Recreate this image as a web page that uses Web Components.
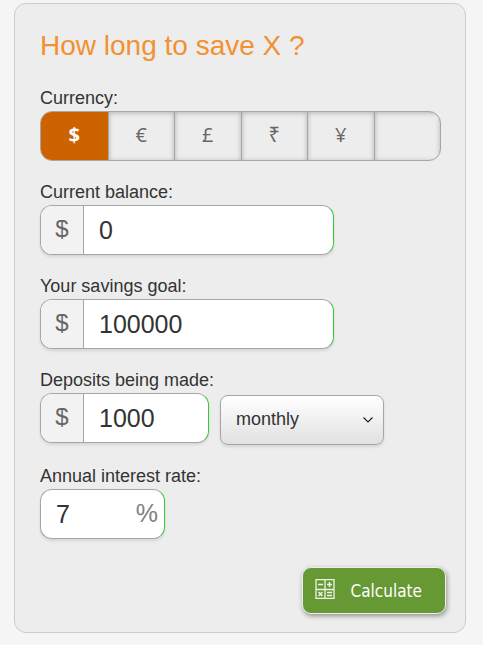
<!DOCTYPE html>
<html lang="en">
<head>
<meta charset="utf-8">
<meta name="viewport" content="width=device-width, initial-scale=1">
<title>Savings calculator</title>
<style>
body {
    margin: 0;
    padding: 3px 17px 12px 14px;
    background-color: #f5f5f5;
    color: #333;
    font: 18px/22px "Liberation Sans", Arial, sans-serif;
}
</style>
</head>
<body>
<savings-card heading="How long to save X ?">
    <currency-picker label="Currency:"></currency-picker>
    <amount-field label="Current balance:" prefix="$" value="0"></amount-field>
    <amount-field label="Your savings goal:" prefix="$" value="100000"></amount-field>
    <amount-field class="deposit" label="Deposits being made:" prefix="$" value="1000">
        <period-select></period-select>
    </amount-field>
    <amount-field class="rate" label="Annual interest rate:" suffix="%" value="7"></amount-field>
    <calculate-button slot="actions">Calculate</calculate-button>
</savings-card>

<script>
const cardTemplate = document.createElement('template');
cardTemplate.innerHTML = `
  <style>
:host {
    display: block;
    background-color: #ededed;
    border: 1px solid #ccc;
    border-radius: 12px;
    padding: 26px 24px 18px 25px;
}

h1 {
    margin: 0 0 25px;
    color: #f29130;
    font-size: 28px;
    line-height: 32px;
    font-weight: normal;
}

.fields {
    display: flex;
    flex-direction: column;
    gap: 20px;
}

.actions {
    display: flex;
    justify-content: flex-end;
    margin-top: 28px;
}

::slotted(amount-field) {
    --field-width: 294px;
}

::slotted(.deposit) {
    --field-width: 169px;
}

::slotted(.rate) {
    --field-width: 125px;
}
</style>
<h1></h1>
<div class="fields"><slot></slot></div>
<div class="actions"><slot name="actions"></slot></div>
`;

class SavingsCard extends HTMLElement {
    constructor() {
        super();
        this.attachShadow({ mode: 'open' });
        this.shadowRoot.appendChild(cardTemplate.content.cloneNode(true));
        this.shadowRoot.querySelector('h1').textContent = this.getAttribute('heading');
    }
}

const currencyTemplate = document.createElement('template');
currencyTemplate.innerHTML = `
  <style>
:host {
    display: block;
}

fieldset {
    margin: 0;
    padding: 0;
    border: 0;
    min-width: 0;
}

legend {
    padding: 0 0 2px;
}

.options {
    display: grid;
    grid-template-columns: repeat(6, 1fr);
    border: 1px solid #a6a6a6;
    border-radius: 12px;
    overflow: hidden;
}

.option {
    display: grid;
    place-items: center;
    box-sizing: border-box;
    height: 48px;
    padding-bottom: 2px;
    border-left: 1px solid #a6a6a6;
    box-shadow: inset 0 1px 5px rgba(0, 0, 0, 0.25);
    color: #666;
    font-family: "Open Sans", "Noto Sans", sans-serif;
    font-size: 20px;
    cursor: pointer;
}

.option:first-child {
    border-left: 0;
}

.option input {
    appearance: none;
    width: 0;
    height: 0;
    margin: 0;
    grid-area: 1 / 1;
}

.option span {
    grid-area: 1 / 1;
}

.option:has(input:checked) {
    background-color: #cc6200;
    box-shadow: none;
    color: #fff;
    font-weight: bold;
}
</style>
<fieldset>
    <legend></legend>
    <div class="options">
        <label class="option"><input type="radio" name="currency" value="USD" checked><span>$</span></label>
        <label class="option"><input type="radio" name="currency" value="EUR"><span>€</span></label>
        <label class="option"><input type="radio" name="currency" value="GBP"><span>£</span></label>
        <label class="option"><input type="radio" name="currency" value="INR"><span>₹</span></label>
        <label class="option"><input type="radio" name="currency" value="JPY"><span>¥</span></label>
        <label class="option"><input type="radio" name="currency" value="" aria-label="No symbol"></label>
    </div>
</fieldset>
`;

class CurrencyPicker extends HTMLElement {
    constructor() {
        super();
        this.attachShadow({ mode: 'open' });
        this.shadowRoot.appendChild(currencyTemplate.content.cloneNode(true));
        this.shadowRoot.querySelector('legend').textContent = this.getAttribute('label');
        this.shadowRoot.addEventListener('change', (e) => this.handleChange(e));
    }

    handleChange(e) {
        const symbol = e.target.parentElement.textContent;
        document.querySelectorAll('amount-field[prefix]').forEach(field => field.setPrefix(symbol));
    }
}

const amountTemplate = document.createElement('template');
amountTemplate.innerHTML = `
  <style>
:host {
    display: block;
}

label {
    display: block;
    padding-bottom: 2px;
}

.row {
    display: flex;
    align-items: flex-start;
    gap: 11px;
}

.box {
    display: flex;
    box-sizing: border-box;
    width: var(--field-width);
    height: 50px;
    border: 1px solid #a6a6a6;
    border-right-color: limegreen;
    border-radius: 12px;
    background-color: #fff;
    box-shadow: 0 2px 3px rgba(0, 0, 0, 0.1);
    overflow: hidden;
    font-size: 25px;
    line-height: 48px;
}

.prefix {
    flex: none;
    width: 42px;
    border-right: 1px solid #a6a6a6;
    background-color: #f2f2f2;
    color: #666;
    font-size: 24px;
    line-height: 46px;
    text-align: center;
}

.suffix {
    flex: none;
    padding-right: 6px;
    color: #808080;
    line-height: 46px;
}

.prefix:empty,
.suffix:empty {
    display: none;
}

input {
    flex: 1;
    min-width: 0;
    padding: 0 0 0 15px;
    border: 0;
    outline: 0;
    background: none;
    color: #333;
    font: inherit;
}
</style>
<label for="amount"></label>
<div class="row">
    <div class="box">
        <span class="prefix"></span>
        <input id="amount" type="text" inputmode="decimal">
        <span class="suffix"></span>
    </div>
    <slot></slot>
</div>
`;

class AmountField extends HTMLElement {
    constructor() {
        super();
        this.attachShadow({ mode: 'open' });
        this.shadowRoot.appendChild(amountTemplate.content.cloneNode(true));

        this.shadowRoot.querySelector('label').textContent = this.getAttribute('label');
        this.shadowRoot.querySelector('input').value = this.getAttribute('value');
        this.shadowRoot.querySelector('.suffix').textContent = this.getAttribute('suffix') || '';
        this.setPrefix(this.getAttribute('prefix') || '');
    }

    setPrefix(symbol) {
        this.shadowRoot.querySelector('.prefix').textContent = symbol;
    }
}

const periodTemplate = document.createElement('template');
periodTemplate.innerHTML = `
  <style>
:host {
    display: grid;
    align-items: center;
    width: 164px;
    margin-top: 2px;
}

select {
    grid-area: 1 / 1;
    appearance: none;
    width: 100%;
    height: 50px;
    padding: 0 40px 2px 15px;
    border: 1px solid #a6a6a6;
    border-radius: 8px;
    background: linear-gradient(#fff, #e1e1e1);
    box-shadow: 0 2px 3px rgba(0, 0, 0, 0.1);
    color: #333;
    font: inherit;
}

svg {
    grid-area: 1 / 1;
    justify-self: end;
    margin-right: 11px;
    pointer-events: none;
}
</style>
<select aria-label="Deposit frequency">
    <option>weekly</option>
    <option selected>monthly</option>
    <option>yearly</option>
</select>
<svg width="10" height="6" viewBox="0 0 10 6" fill="none" stroke="#222" stroke-width="1.2">
    <path d="M.5 .5 5 5 9.500 .5"/>
</svg>
`;

class PeriodSelect extends HTMLElement {
    constructor() {
        super();
        this.attachShadow({ mode: 'open' });
        this.shadowRoot.appendChild(periodTemplate.content.cloneNode(true));
    }
}

const buttonTemplate = document.createElement('template');
buttonTemplate.innerHTML = `
  <style>
:host {
    display: block;
    margin-right: -5px;
}

button {
    display: flex;
    align-items: center;
    gap: 16px;
    height: 47px;
    padding: 0 23px 0 12px;
    border: 1px solid #eee;
    border-radius: 9px;
    background-color: #669933;
    box-shadow: 1px 2px 5px rgba(0, 0, 0, 0.4);
    color: #fff;
    font: 17px/24px "DejaVu Sans Condensed", "Noto Sans", sans-serif;
    cursor: pointer;
}

svg {
    margin-bottom: 3px;
}
</style>
<button type="button">
    <svg width="20" height="20" viewBox="0 0 20 20" fill="none" stroke="#eef5e6" aria-hidden="true">
        <path d="M1 .5h18v19H1zM10 .5v19M1 10.500h18" stroke-width="1.300"/>
        <path d="M3 5.500h5M12 5.500h5M14.500 3v5M12 13.500h5M12 16.500h5M3.500 13l4 4M7.500 13l-4 4" stroke-width="1.500"/>
    </svg>
    <slot></slot>
</button>
`;

class CalculateButton extends HTMLElement {
    constructor() {
        super();
        this.attachShadow({ mode: 'open' });
        this.shadowRoot.appendChild(buttonTemplate.content.cloneNode(true));
    }
}

customElements.define('savings-card', SavingsCard);
customElements.define('currency-picker', CurrencyPicker);
customElements.define('amount-field', AmountField);
customElements.define('period-select', PeriodSelect);
customElements.define('calculate-button', CalculateButton);
</script>
</body>
</html>
